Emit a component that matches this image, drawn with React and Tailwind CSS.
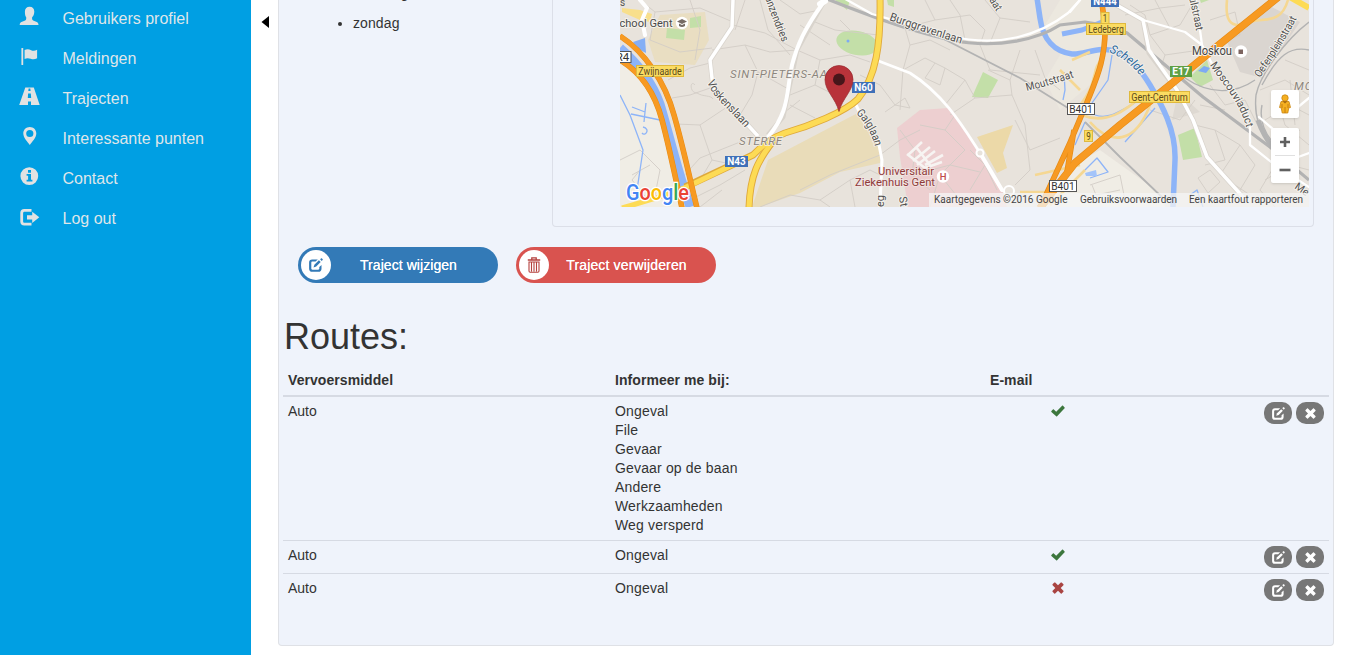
import React from 'react';

const icons = {
  user: (
    <path d="M10.600.8c2.800 0 4.700 1.900 4.700 4.700 0 2.600-.9 4.600-2.200 5.700v1.900c0 .7.400 1.100 1 1.400l3.700 1.500c1.200.5 1.700 1.500 1.700 3H.7c0-1.500.5-2.500 1.700-3l3.800-1.500c.6-.3 1-.7 1-1.400v-1.900C6.200 10.100 5.900 8.100 5.900 5.500 5.900 2.700 7.800.8 10.600.8z" />
  ),
  flag: (
    <>
      <rect x="2.400" y="2" width="1.800" height="17" rx=".6" />
      <path d="M5.600 4c2.500-1.200 4.800-.6 6.500.2 2 .9 3.900.8 6-.4v8.400c-2.200 1.400-4.400 1.400-6.400.6-2-.8-4-1-6.100.1z" />
    </>
  ),
  road: (
    <path
      fillRule="evenodd"
      d="M6.300 1.500h8.500L20.700 19H12V15.500H9V19H.2zM9.600 2.500 9.300 5h2.300l-.3-2.500zM9.100 7.500 8.800 12h3.400l-.4-4.500z"
    />
  ),
  pin: (
    <path
      fillRule="evenodd"
      d="M10.800 1c3.700 0 6.500 2.800 6.500 6.400 0 4.300-4.300 8.200-6.500 11.600C8.600 15.600 4.300 11.700 4.300 7.400 4.300 3.800 7.100 1 10.800 1zm0 2.900a3.600 3.600 0 1 0 0 7.200 3.600 3.600 0 0 0 0-7.200z"
    />
  ),
  info: (
    <path
      fillRule="evenodd"
      d="M10.300 1.200a8.900 8.900 0 1 1 0 17.800 8.900 8.900 0 0 1 0-17.800zM9 4v2.800h3V4zM7.600 8v1.700h1.500v4H7.600v1.700h5.800v-1.700H12V8z"
    />
  ),
  logout: (
    <>
      <path d="M12.500 3H5.300C2.800 3 1.300 4.500 1.300 7v8.500c0 2.500 1.500 4 4 4h7.200v-2.800H5.600c-1 0-1.500-.5-1.500-1.500V7.300c0-1 .5-1.500 1.500-1.500h6.900z" />
      <path d="M13.200 5.700 20.300 11.300 13.200 17v-3.600H8V9.200h5.200z" />
    </>
  ),
};

const menu = [
  ['user', 'Gebruikers profiel'],
  ['flag', 'Meldingen'],
  ['road', 'Trajecten'],
  ['pin', 'Interessante punten'],
  ['info', 'Contact'],
  ['logout', 'Log out'],
];

function EditIcon({ className }) {
  return (
    <svg viewBox="0 0 14 14" className={className} fill="currentColor">
      <path d="M8.800 1.400H3.200C1.200 1.400.1 2.500.1 4.500v6.200c0 2 1.100 3.100 3.100 3.100h6.200c2 0 3.100-1.100 3.100-3.100V6.900L10.300 9v1.600c0 .7-.4 1.100-1.100 1.100H3.400c-.7 0-1.100-.4-1.100-1.100V4.700c0-.7.400-1.100 1.100-1.100h3.200z" />
      <path d="M9.900 2.300 11.700 4.100 7.200 8.600 4.500 9.500 5.400 6.800z" />
      <path d="M11.100 1.300 12 .4c.3-.3.600-.3.900 0l.7.7c.3.3.3.600 0 .9l-.9.900z" />
    </svg>
  );
}

function TrashIcon({ className }) {
  return (
    <svg viewBox="0 0 14 16" className={className} fill="none" stroke="currentColor">
      <path d="M4.800 2.500V.8h4.400v1.700M.8 3h12.400" strokeWidth="1.300" />
      <path d="M2 4.500V14c0 .8.400 1.200 1.200 1.200h7.600c.8 0 1.200-.4 1.200-1.200V4.500M4.500 5v9.500M7 5v9.500M9.500 5v9.500M2 5h10" strokeWidth="1.100" />
    </svg>
  );
}

function CrossIcon({ className }) {
  return (
    <svg viewBox="0 0 12 12" className={className} fill="currentColor">
      <path d="M3.200.6 6 3.300 8.800.6c.3-.3.6-.3.900 0l1.700 1.700c.3.3.3.600 0 .9L8.700 6l2.700 2.800c.3.3.3.600 0 .9l-1.700 1.700c-.3.3-.6.3-.9 0L6 8.700l-2.800 2.700c-.3.3-.6.3-.9 0L.6 9.700c-.3-.3-.3-.6 0-.9L3.300 6 .6 3.200c-.3-.3-.3-.6 0-.9L2.300.6c.3-.3.6-.3.900 0z" />
    </svg>
  );
}

function CheckIcon({ className }) {
  return (
    <svg viewBox="0 0 14 12" className={className} fill="currentColor">
      <path d="M5.200 11.300.4 7c-.3-.3-.3-.6 0-.9l1.500-1.600c.3-.3.6-.3.900 0L5.200 6.800 11.100.8c.3-.3.6-.3.900 0l1.600 1.600c.3.3.3.6 0 .9L6.100 11.300c-.3.3-.6.3-.9 0z" />
    </svg>
  );
}

const streets = [
  'M640 0 655 12 700 8 733 22M655 12 650 40 680 52 712 48M690 0 700 30 695 60M760 0 768 30 790 55M733 25 765 33 797 50M745 0 735 30M780 0 800 14 820 10',
  'M712 50 745 45 770 52 797 50M745 45 758 72 752 95 740 115M710 63 690 68 668 80M758 72 790 90M713 87 690 95 672 98M730 105 700 125 676 124M740 115 757 135M700 125 712 160 700 180M712 160 735 165M680 180 700 158 740 142',
  'M797 50 820 60 850 55 870 62M820 60 815 85 790 95M815 85 835 95M800 25 830 45M810 20 835 30 878 35M790 105 815 118M785 112 800 100M840 20 850 30',
  'M690 200 720 185 745 170M700 207 722 190M760 207 790 195 820 200 850 180 870 170 880 175M820 200 830 207M800 190 830 175 880 155 900 140 920 130M850 180 855 207',
  'M620 160 640 150 660 170 655 195M640 170 632 180 648 200M632 175 650 165M695 85c-5-6-6 8 2 8 6 4 14 2 16 6',
  'M880 20 905 28 910 45 903 70 900 110M910 45 930 40 950 50M925 0 935 20 970 15 985 30 980 45M935 20 915 25M950 0 960 15 965 40M985 0 1000 18 1030 22M1000 18 990 43M980 45 990 70 1040 75',
  'M903 70 925 58 945 68 965 80 975 98 1012 95 1025 125 1030 170 1015 185M945 68 940 85 925 78 935 63M965 80 945 105M975 98 950 115M988 70 1010 80 1012 95M1020 50 1010 80M1035 50 1045 78 1060 90M1015 120 1030 150 1060 138',
  'M900 130 915 150 912 175 930 190M920 125 945 130 965 150 940 175 960 200M945 130 955 115M912 175 950 165 980 172M970 150 985 165 970 190M940 175 930 207M985 165 997 190M860 75 880 85 895 105 910 108 905 98 885 112',
  'M1130 5 1145 15 1150 35 1180 25 1195 0M1150 35 1165 55 1160 70M1155 0 1170 28M1165 55 1200 50M1125 15 1160 8 1185 5M1195 100 1180 120 1150 110M1210 20 1235 12 1240 35 1215 45',
  'M1195 125 1215 130 1240 145 1255 165 1240 190M1215 130 1225 160 1205 165M1240 145 1220 175 1250 195M1198 178 1210 170 1220 182 1208 193zM1225 110 1200 105M1210 85 1225 105 1245 100 1260 130',
  'M1260 90 1285 80 1309 95M1265 120 1290 105 1309 115M1275 90 1285 125 1309 145M1290 80 1295 125M1265 180 1290 165 1309 170M1280 140 1300 130M1285 60 1309 70M1275 165 1260 190 1275 207M1090 185 1120 175 1125 200M1092 185 1096 195 1120 190',
];

const thinBlue = 'M620 95 630 115 643 150 637 190M631 114 660 120M632 107 645 112 646 103M645 112 644 122M643 127c8 2 2 10-1 6M1085 122 1075 145M1095 115c15 5 25-5 40-12M1112 55 1108 80 1092 103M1155 108 1140 125 1125 142M1085 170 1097 158 1108 172 1090 178M1190 195 1197 190 1203 207M1064 72 1065 90 1063 100';

function PathLabel({ id, d, children, size = 11, fill = '#505050', italic = false, length }) {
  return (
    <>
      <path id={id} d={d} fill="none" />
      <text
        fontSize={size}
        fill={fill}
        stroke="#f5f2ec"
        strokeWidth="1.800"
        paintOrder="stroke"
        fontStyle={italic ? 'italic' : 'normal'}
        textLength={length}
        lengthAdjust="spacingAndGlyphs"
      >
        <textPath href={'#' + id}>{children}</textPath>
      </text>
    </>
  );
}

function Shield({ x, y, w, h = 11, fill, stroke, color, bold = false, children }) {
  return (
    <g>
      <rect x={x} y={y} width={w} height={h} fill={fill} stroke={stroke} strokeWidth="1" />
      <text
        x={x + w / 2}
        y={y + h / 2 + 3.500}
        fontSize="10"
        textAnchor="middle"
        fill={color}
        fontWeight={bold ? 700 : 400}
        textLength={w - 3.500}
        lengthAdjust="spacingAndGlyphs"
      >
        {children}
      </text>
    </g>
  );
}

const yellow = { fill: '#fbdc62', stroke: '#dfb93d', color: '#5a4a1c' };
const blue = { fill: '#3f70b8', stroke: '#3f70b8', color: '#fff', bold: true };
const white = { fill: '#fff', stroke: '#555', color: '#333' };

function CityMap() {
  return (
    <svg viewBox="620 0 689 207" className="block h-[207px] w-[689px] font-[Roboto,sans-serif]">
      <rect x="620" y="0" width="689" height="207" fill="#e8e3dc" />
      <path d="M620 60 653 90 663 123 673 160 682 207H620z" fill="#f0ede5" />
      <path d="M1065 170 1100 150 1160 193 1165 207H1040z" fill="#f0ede5" />
      <path d="M1060 0H1100L1104 50 1090 85 1060 110 1045 80 1060 55 1042 30z" fill="#ece8df" />

      <g fill="#e9dcb9">
        <path d="M768 160 850 117 860 112 880 150 880 163 840 172 800 193 760 207 752 207z" />
        <path d="M660 15 705 12 709 40 695 65 655 62 648 40z" opacity=".75" />
        <path d="M977 137 1013 125 1003 153 1007 168 997 173z" fill="#ecd9a8" />
      </g>
      <path d="M897 128 920 110 948 108 973 143 1003 193 1007 207H908L900 157z" fill="#edcfd0" />
      <path d="M1227 42 1270 6 1300 22 1262 78 1240 72z" fill="#dad5d0" />
      <path d="M1178 92 1200 112 1172 120z" fill="#ded9d2" />
      <g fill="#c3dfa8">
        <ellipse cx="857" cy="43" rx="21" ry="12" transform="rotate(12 857 43)" />
        <path d="M972 97 983 72 998 80 988 98z" />
        <path d="M1178 135 1195 128 1202 157 1183 160z" />
        <path d="M1190 77 1207 60 1213 80 1200 87z" />
        <path d="M690 18 701 16 701 27 690 28zM667 28 685 30 684 40 666 38z" />
        <path d="M835 0h15l-3 10z" />
        <path d="M887 0h7v7l-6-2zM1200 0h9l-8 3z" />
      </g>
      <path d="M640 10 652 14 650 22 640 20 622 12V8z" fill="#f8df8c" />

      <g fill="none" stroke="#d2cdc6" strokeWidth=".9">
        {streets.map((d) => (
          <path key={d} d={d} />
        ))}
      </g>
      <path d="M908 155 922 142M913 161 930 147M917 165 935 151M925 165 943 155M907 154 925 168 942 162M916 147 930 165" fill="none" stroke="#f7f4f2" strokeWidth="2.600" />

      <g fill="none" stroke="#8db4f8" strokeLinejoin="round">
        <path d={thinBlue} strokeWidth="1.300" />
        <path d="M620 48C636 62 652 82 660 104 668 130 676 165 690 207" strokeWidth="9" />
        <path d="M1037 -2 1040 18C1043 40 1055 52 1072 54 1085 55 1100 45 1118 52 1135 62 1142 72 1150 85 1162 105 1176 130 1175 160L1173 207" strokeWidth="5.500" />
        <path d="M1062 34 1082 30 1102 22" strokeWidth="5" />
      </g>
      <path d="M633 42 645 38 646 53 636 48z" fill="#84aef5" />
      <path d="M1198 71 1204 66 1210 68 1206 73z" fill="#7eaaf3" />
      <path d="M1085 173 1096 170 1097 176 1086 176z" fill="#a3c4fa" />
      <circle cx="848" cy="41" r="1.500" fill="#7eaaf3" />

      <g fill="none" stroke="#b3b3b3">
        <path d="M822 -3C860 12 900 28 950 40 1000 50 1040 38 1060 25L1085 22 1110 26 1127 33 1203 97 1270 147 1309 180" strokeWidth="3.200" />
        <path d="M940 37 1020 78 1068 108M1085 122 1120 157 1165 200" strokeWidth="1.800" />
        <path d="M1185 78C1210 95 1235 94 1255 80M1309 22C1285 40 1260 75 1256 95 1254 115 1258 130 1275 150M1309 50C1290 46 1278 55 1262 85M1262 105C1258 125 1268 142 1290 158" strokeWidth="1.400" />
        <path d="M1258 120C1262 132 1268 142 1275 150" strokeWidth="5" />
      </g>

      <g fill="none" stroke="#d9d4cd" strokeWidth="5" strokeLinejoin="round">
        <path d="M733 0 732 27 710 60 713 87 757 135M823 3 797 50 788 93 783 117 768 135" />
        <path d="M1113 3 1143 20 1149 53 1177 90 1193 120 1207 157 1243 197" />
      </g>
      <g fill="none" stroke="#fff" strokeLinejoin="round" strokeLinecap="round">
        <path d="M733 0 732 27 710 60 713 87 757 135" strokeWidth="3.500" />
        <path d="M823 3C805 28 797 45 792 65 786 95 789 112 768 137" strokeWidth="4" />
        <path d="M820 4 825 1" strokeWidth="6" />
        <path d="M840 -4 872 14 950 36C1000 48 1040 35 1068 13L1080 0" strokeWidth="2.300" />
        <path d="M856 105 866 125 878 140 882 160 880 207" strokeWidth="3" />
        <path d="M876 60 910 73C945 95 965 130 980 153L1002 190 1012 194" strokeWidth="2.800" />
        <path d="M980 153 1002 190" strokeWidth="4" />
        <path d="M1113 3 1143 20 1149 50 1177 90 1193 120 1207 157 1243 197" strokeWidth="3.600" />
        <path d="M1143 20 1185 32 1202 45 1211 62 1250 120 1250 145 1275 165 1309 187M1196 0 1202 45M1070 12 1080 0M1292 112 1309 98M1259 117 1280 135M1290 160 1309 153" strokeWidth="2.300" />
        <path d="M640 0 647 8 642 20 645 35" strokeWidth="4" />
      </g>
      <g fill="#e8e3dc" stroke="#fff" strokeWidth="2">
        <circle cx="980" cy="153" r="3.500" />
        <circle cx="1009" cy="191" r="5" />
      </g>

      <g fill="none" stroke="#f5d792" strokeWidth="2.600">
        <path d="M1082 115C1105 125 1125 112 1145 93M1090 122C1110 145 1135 145 1150 105M1080 105C1100 80 1090 70 1103 58M1227 0C1225 20 1230 28 1245 24 1260 15 1280 28 1288 0M1050 205 1085 170M1020 192H1045M1072 60 1090 52M1060 70 1080 90M1035 175 1080 165" />
      </g>

      <g fill="none" strokeLinejoin="round">
        <g stroke="#dfa93b" strokeWidth="7">
          <path d="M685 187 753 155C765 143 772 138 785 133 810 126 845 112 858 99 876 77 881 45 880 -3" />
          <path d="M774 140C758 160 750 175 749 208" />
        </g>
        <g stroke="#fddb55">
          <path d="M622 208C650 200 675 193 695 183L753 155C765 143 772 138 785 133 810 126 845 112 858 99 876 77 881 45 880 -3" strokeWidth="5.200" />
          <path d="M774 140C758 160 750 175 749 208" strokeWidth="5.200" />
          <path d="M1288 -4 1309 8" strokeWidth="6" />
        </g>
        <g stroke="#e68b16">
          <path d="M620 60C640 72 654 90 662 120 670 150 677 185 682 208M620 36C645 52 665 82 674 115 684 150 690 180 697 208" strokeWidth="5.600" />
          <path d="M1282 -6 1220 44 1170 85 1120 125 1075 163 1040 208" strokeWidth="7.600" />
          <path d="M1101 -3 1105 25C1106 55 1098 75 1090 95L1069 145 1040 208M1074 130 1067 172" strokeWidth="5.600" />
        </g>
        <g stroke="#f79a22">
          <path d="M620 60C640 72 654 90 662 120 670 150 677 185 682 208M620 36C645 52 665 82 674 115 684 150 690 180 697 208" strokeWidth="4.600" />
          <path d="M1282 -6 1220 44 1170 85 1120 125 1075 163 1040 208" strokeWidth="6.400" />
          <path d="M1101 -3 1105 25C1106 55 1098 75 1090 95L1069 145 1040 208M1074 130 1067 172" strokeWidth="4.200" />
        </g>
      </g>

      <text x="620" y="6" fontSize="10" fill="#555">s</text>
      <text x="619.500" y="27" fontSize="11.500" fill="#4a4a4a" stroke="#f5f2ec" strokeWidth="2" paintOrder="stroke" textLength="53" lengthAdjust="spacingAndGlyphs">
        chool Gent
      </text>
      <circle cx="682" cy="23" r="6.200" fill="#fff" />
      <path d="M677 21.500 682 19l5 2.500-5 2.500zM679 23.500v2.500c2 1.200 4 1.200 6 0v-2.500l-3 1.500z" fill="#776b66" />

      <PathLabel id="lanzendries" d="M765 -2C770 12 776 28 784 46" length="48">anzendries</PathLabel>
      <PathLabel id="voskenslaan" d="M707 82C713 98 728 108 747 130" length="60" size={11.500}>Voskenslaan</PathLabel>
      <PathLabel id="burggraven" d="M889 20C912 28 938 37 968 46" length="76" size={11.500}>Burggravenlaan</PathLabel>
      <PathLabel id="galglaan" d="M856 113C865 123 873 134 876 152" length="39" size={11.500}>Galglaan</PathLabel>
      <PathLabel id="moutstraat" d="M1027 91C1040 88 1060 82 1078 76" length="49">Moutstraat</PathLabel>
      <PathLabel id="schelde" d="M1109 52C1122 57 1133 66 1143 79" size={12} fill="#2d6a9f" italic length="40">Schelde</PathLabel>
      <PathLabel id="ulstraat" d="M1189 -2C1192 10 1194 20 1197 35" length="34">ulstraat</PathLabel>
      <PathLabel id="aat" d="M989 0 999 16" length="14">aat</PathLabel>
      <PathLabel id="oefenplein" d="M1260 78C1272 60 1287 38 1300 12" length="70">Oefenpleinstraat</PathLabel>
      <PathLabel id="moscouvia" d="M1210 65C1222 84 1242 104 1247 131" length="73">Moscouviaduct</PathLabel>
      <PathLabel id="meer" d="M1294 188 1310 199" size={10.500}>Me</PathLabel>
      <PathLabel id="weg" d="M884 207 884 190">eg</PathLabel>
      <PathLabel id="st" d="M899 197 901 211">St</PathLabel>

      <g fill="#8c857d" fontStyle="italic" fontSize="11.500" stroke="#f0ece5" strokeWidth="1.500" paintOrder="stroke">
        <text x="730" y="77.500" textLength="97">SINT-PIETERS-AA</text>
        <text x="739" y="145" textLength="43">STERRE</text>
        <text x="1294" y="90" textLength="26">MOS</text>
      </g>
      <g fill="#8e3a3a" fontSize="11.500" stroke="#f3e6e4" strokeWidth="1.500" paintOrder="stroke">
        <text x="878" y="175" textLength="56" lengthAdjust="spacingAndGlyphs">Universitair</text>
        <text x="855" y="186" textLength="80" lengthAdjust="spacingAndGlyphs">Ziekenhuis Gent</text>
      </g>
      <circle cx="943" cy="176.500" r="6.200" fill="#fff" />
      <text x="943" y="180" fontSize="9.500" fontWeight="500" textAnchor="middle" fill="#c04a4a">H</text>
      <text x="1192" y="55" fontSize="12" fill="#444" stroke="#f5f2ec" strokeWidth="2" paintOrder="stroke" textLength="40" lengthAdjust="spacingAndGlyphs">
        Moskou
      </text>
      <circle cx="1241" cy="51.500" r="6.200" fill="#fff" />
      <rect x="1238.500" y="49.500" width="4.500" height="4.500" fill="#7d6560" />

      <Shield x={614} y={51.500} w={17} {...white}>R4</Shield>
      <Shield x={636.500} y={65.500} w={47} {...yellow}>Zwijnaarde</Shield>
      <Shield x={725.500} y={156.500} w={22} h={10} {...blue}>N43</Shield>
      <Shield x={852.500} y={82.500} w={22} h={10} {...blue}>N60</Shield>
      <Shield x={1091.500} y={-3.500} w={27} h={10} {...blue}>N444</Shield>
      <Shield x={1101} y={12.500} w={8} {...yellow}>1</Shield>
      <Shield x={1086.500} y={23.500} w={39} {...yellow}>Ledeberg</Shield>
      <Shield x={1170.500} y={66.500} w={21} h={10} fill="#5fa044" stroke="#5fa044" color="#fff" bold>E17</Shield>
      <Shield x={1129.500} y={91.500} w={60} {...yellow}>Gent-Centrum</Shield>
      <Shield x={1067.500} y={103.500} w={27} {...white}>B401</Shield>
      <Shield x={1049.500} y={180.500} w={27} {...white}>B401</Shield>
      <Shield x={1084.500} y={130.500} w={8} {...yellow}>9</Shield>

      <path d="M839 111.500C835.500 98 825 91 825 79.500a14 14 0 0 1 28 0C853 91 842.500 98 839 111.500z" fill="#b8333a" stroke="#982b31" strokeWidth=".7" />
      <circle cx="839" cy="79.500" r="6" fill="#47161a" />

      <text x="626" y="199.500" fontSize="21.500" fontWeight="500" fontFamily="Roboto, sans-serif" stroke="#fff" strokeWidth="2.500" paintOrder="stroke" textLength="63" lengthAdjust="spacingAndGlyphs">
        <tspan fill="#4285f4">G</tspan>
        <tspan fill="#ea4335">o</tspan>
        <tspan fill="#fbbc05">o</tspan>
        <tspan fill="#4285f4">g</tspan>
        <tspan fill="#34a853">l</tspan>
        <tspan fill="#ea4335">e</tspan>
      </text>
    </svg>
  );
}

function MapPanel() {
  return (
    <div className="relative h-[207px] w-[689px] overflow-hidden">
      <CityMap />
      <div className="absolute right-0 bottom-0 flex h-[14px] w-[380px] items-center bg-[#f5f5f5]/75 pl-[5px] font-[Roboto,sans-serif] text-[10px] leading-[14px] whitespace-nowrap text-[#444]">
        <span className="w-[146px]">Kaartgegevens ©2016 Google</span>
        <span className="w-[109px]">Gebruiksvoorwaarden</span>
        <span>Een kaartfout rapporteren</span>
      </div>
      <div className="absolute top-[90px] right-[10px] flex h-7 w-7 items-center justify-center rounded-xs bg-white shadow-sm">
        <svg viewBox="0 0 12 20" className="h-5 w-3">
          <path d="M2 7.500h8l1.500 6-1.700.3L8.800 19H3.200l-1-5.200L.5 13.500z" fill="#f5b021" stroke="#c98512" strokeWidth=".8" />
          <circle cx="6" cy="4" r="3.200" fill="#f5b021" stroke="#c98512" strokeWidth=".8" />
          <path d="M6 13v6M3 10v4M9 10v4" stroke="#b87410" strokeWidth=".8" />
          <path d="M3.500 7.300h5L6 9.500z" fill="#a5690f" />
        </svg>
      </div>
      <div className="absolute top-[128px] right-[10px] flex w-7 flex-col items-center rounded-xs bg-white shadow-sm">
        <div className="flex h-[27px] items-center">
          <svg viewBox="0 0 12 12" className="h-3 w-3" stroke="#606060" strokeWidth="2.600">
            <path d="M6 1v10M1 6h10" />
          </svg>
        </div>
        <div className="h-px w-5 bg-[#e0e0e0]" />
        <div className="flex h-[27px] items-center">
          <svg viewBox="0 0 12 12" className="h-3 w-3" stroke="#606060" strokeWidth="2.600">
            <path d="M.5 6h11" />
          </svg>
        </div>
      </div>
    </div>
  );
}

const routes = [
  {
    vehicle: 'Auto',
    events: ['Ongeval', 'File', 'Gevaar', 'Gevaar op de baan', 'Andere', 'Werkzaamheden', 'Weg versperd'],
    email: true,
  },
  { vehicle: 'Auto', events: ['Ongeval'], email: true },
  { vehicle: 'Auto', events: ['Ongeval'], email: false },
];

function RouteTable() {
  return (
    <table className="mt-[9px] ml-1 w-[1046px] table-fixed border-separate border-spacing-0 text-left leading-[19px]">
      <colgroup>
        <col className="w-[327px]" />
        <col className="w-[375px]" />
        <col className="w-[146px]" />
        <col />
      </colgroup>
      <thead>
        <tr>
          {['Vervoersmiddel', 'Informeer me bij:', 'E-mail', ''].map((h) => (
            <th key={h} className="h-[31px] border-b-2 border-[#d6dae3] p-[5px] font-bold tracking-[0.06px]">
              {h}
            </th>
          ))}
        </tr>
      </thead>
      <tbody className="[&>tr+tr>td]:border-t">
        {routes.map((r, i) => (
          <tr key={i} className="align-top *:border-[#d6dae3] *:p-[5px]">
            <td>{r.vehicle}</td>
            <td className="tracking-[0.16px]">
              {r.events.map((e) => (
                <div key={e}>{e}</div>
              ))}
            </td>
            <td>
              <div className="flex h-[18px] items-center justify-center">
                {r.email ? (
                  <CheckIcon className="h-3 w-[14px] text-[#3c763d]" />
                ) : (
                  <CrossIcon className="h-3 w-3 text-[#a94442]" />
                )}
              </div>
            </td>
            <td>
              <div className="flex justify-end gap-1 text-white">
                <button className="flex h-[22px] w-7 items-center justify-center rounded-[10px] bg-[#777]">
                  <EditIcon className="h-[13px] w-[13px]" />
                </button>
                <button className="flex h-[22px] w-7 items-center justify-center rounded-[10px] bg-[#777]">
                  <CrossIcon className="h-[11px] w-[11px]" />
                </button>
              </div>
            </td>
          </tr>
        ))}
      </tbody>
    </table>
  );
}

export default function App() {
  return (
    <div className="flex h-[655px] w-[1347px] overflow-hidden bg-white font-['Liberation_Sans',Arial,sans-serif] text-sm text-[#333]">
      <nav className="w-[251px] shrink-0 bg-[#009fe3] text-base text-[#dfe6ea]">
        <ul className="-mt-px">
          {menu.map(([icon, label]) => (
            <li key={label} className="flex h-10 items-center pl-[19px]">
              <svg viewBox="0 0 21 20" className="-mt-1.5 mr-[22.500px] h-5 w-[21px] shrink-0" fill="#e2e2e2">
                {icons[icon]}
              </svg>
              <span>{label}</span>
            </li>
          ))}
        </ul>
      </nav>

      <div className="w-[27px] shrink-0 pt-[15px] pl-[10px]">
        <svg viewBox="0 0 8 14" className="h-[14px] w-2">
          <path d="M8 1v12L.5 7z" fill="#000" />
        </svg>
      </div>

      <main className="h-[646px] w-[1056px] rounded-b border border-t-0 border-[#dfe1e6] bg-[#eff3fb]">
        <div className="flex h-[227px]">
          <ul className="-mt-[22px] w-[273px] shrink-0 pl-[59px] leading-[30px]">
            {['zaterdag', 'zondag'].map((day) => (
              <li key={day} className="flex h-[30px] items-center tracking-[0.1px]">
                <span className="mt-0.5 mr-[11px] h-1 w-1 rounded-full bg-[#333]" />
                {day}
              </li>
            ))}
          </ul>
          <div className="h-[227px] w-[762px] rounded-b border border-t-0 border-[#dcdfe8] pl-[67px]">
            <MapPanel />
          </div>
        </div>

        <div className="mt-5 ml-[19px] flex gap-[18px] text-white">
          <button className="flex h-9 w-[200px] items-center rounded-full bg-[#337ab7] pr-1 pl-[3px]">
            <span className="flex h-[30px] w-[30px] shrink-0 items-center justify-center rounded-full bg-white text-[#337ab7]">
              <EditIcon className="h-[14px] w-[14px]" />
            </span>
            <span className="flex-1 pr-2 text-center tracking-[0.06px] [text-shadow:0_0_0.6px_#fff]">Traject wijzigen</span>
          </button>
          <button className="flex h-9 w-[200px] items-center rounded-full bg-[#d9534f] pr-1 pl-[3px]">
            <span className="flex h-[30px] w-[30px] shrink-0 items-center justify-center rounded-full bg-white text-[#b5413e]">
              <TrashIcon className="h-4 w-[14px]" />
            </span>
            <span className="flex-1 pr-2 text-center tracking-[0.15px] [text-shadow:0_0_0.6px_#fff]">Traject verwijderen</span>
          </button>
        </div>

        <h1 className="mt-[34px] ml-[5px] text-[36px] leading-10">Routes:</h1>
        <RouteTable />
      </main>
    </div>
  );
}
